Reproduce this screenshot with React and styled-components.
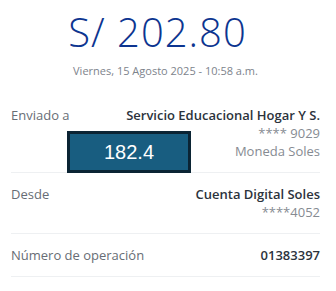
import React from "react";
import styled, { createGlobalStyle } from "styled-components";

const GlobalStyle = createGlobalStyle`
  body {
    margin: 0;
    background: #ffffff;
    font-family: "Open Sans", "Noto Sans", sans-serif;
  }
`;

const Page = styled.div`
  position: relative;
  width: 336px;
  height: 291px;
  padding: 0 16px 0 11px;
  box-sizing: border-box;
  overflow: hidden;
`;

const Header = styled.div`
  height: 94px;
  display: flex;
  flex-direction: column;
  align-items: center;
`;

const Amount = styled.div`
  margin-top: 6px;
  padding-right: 16px;
  font-size: 40px;
  line-height: 52px;
  font-weight: 300;
  color: #0d3590;
  letter-spacing: 1px;
`;

const DateText = styled.div`
  margin-top: 6px;
  font-size: 11px;
  line-height: 14px;
  color: #7d838c;
`;

const Row = styled.div`
  display: flex;
  justify-content: space-between;
  padding: 12px 0;
  border-bottom: 1px solid #eef0f2;
  line-height: 18px;
  font-size: 13px;
`;

const Label = styled.div`
  color: #676d75;
`;

const Values = styled.div`
  display: flex;
  flex-direction: column;
  align-items: flex-end;
  text-align: right;
`;

const Value = styled.div`
  color: ${(p) => (p.strong ? "#2c333c" : "#868b92")};
  font-weight: ${(p) => (p.strong ? 600 : 400)};
`;

const Overlay = styled.div`
  position: absolute;
  left: 67px;
  top: 131px;
  width: 124px;
  height: 42px;
  box-sizing: border-box;
  border: 3px solid #0b2434;
  background: #185d80;
  color: #ffffff;
  font-family: "Liberation Sans", Arial, sans-serif;
  font-size: 20px;
  display: flex;
  align-items: center;
  justify-content: center;
`;

const rows = [
  { label: "Enviado a", values: ["Servicio Educacional Hogar Y S.", "**** 9029", "Moneda Soles"] },
  { label: "Desde", values: ["Cuenta Digital Soles", "****4052"] },
  { label: "Número de operación", values: ["01383397"] },
];

export default function App() {
  return (
    <>
      <GlobalStyle />
      <Page>
        <Header>
          <Amount>S/ 202.80</Amount>
          <DateText>Viernes, 15 Agosto 2025 - 10:58 a.m.</DateText>
        </Header>
        {rows.map((row) => (
          <Row key={row.label}>
            <Label>{row.label}</Label>
            <Values>
              {row.values.map((v, i) => (
                <Value key={i} strong={i === 0}>{v}</Value>
              ))}
            </Values>
          </Row>
        ))}
        <Overlay>182.4</Overlay>
      </Page>
    </>
  );
}
